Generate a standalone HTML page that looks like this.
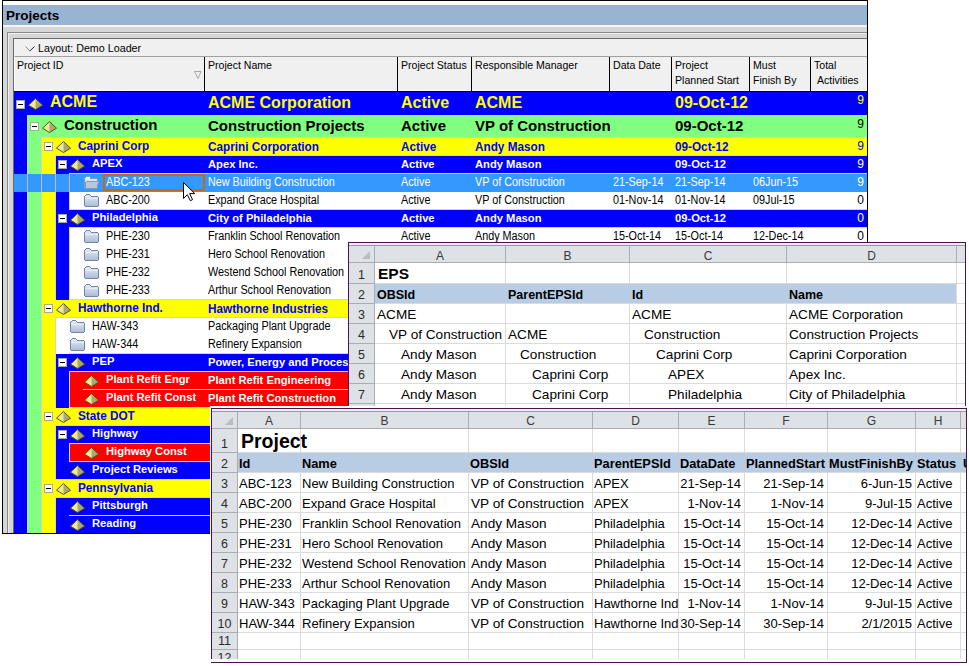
<!DOCTYPE html>
<html><head><meta charset="utf-8"><style>
html,body{margin:0;padding:0;background:#fff;width:969px;height:666px;overflow:hidden;}
body{position:relative;font-family:'Liberation Sans',sans-serif;}
div{position:absolute;}
.t{line-height:1;white-space:nowrap;}
</style></head><body>
<div style="left:2px;top:0px;width:866px;height:534px;background:#d6d6d6;border:1px solid #000;box-sizing:border-box;"></div><div style="left:3px;top:1px;width:864px;height:4px;background:#fff;"></div><div style="left:3px;top:5px;width:864px;height:20px;background:#99b4d1;"></div><div style="left:3px;top:25px;width:864px;height:2px;background:#f4f4f4;"></div><div class="t" style="left:6px;top:8.57px;font-size:13.5px;font-weight:bold;color:#000;">Projects</div><div style="left:7px;top:32px;width:860px;height:1px;background:#8a8a8a;"></div><div style="left:7px;top:32px;width:1px;height:501px;background:#8a8a8a;"></div><div style="left:8px;top:33px;width:859px;height:1px;background:#efefef;"></div><div style="left:8px;top:33px;width:1px;height:500px;background:#efefef;"></div><div style="left:13px;top:38px;width:854px;height:1px;background:#6a6a6a;"></div><div style="left:13px;top:38px;width:1px;height:495px;background:#6a6a6a;"></div><div style="left:14px;top:39px;width:853px;height:17px;background:#f0f0f0;"></div><div style="left:15px;top:56px;width:852px;height:1px;background:#a0a0a0;"></div><svg style="left:25px;top:46px;position:absolute" width="10" height="6" viewBox="0 0 10 6"><path d="M0.5 0.5 L4.8 5" stroke="#8a8a8a" stroke-width="1" fill="none"/><path d="M4.8 5 L9.5 0.5" stroke="#222" stroke-width="1" fill="none"/></svg><div class="t" style="left:38px;top:42.69px;font-size:11px;color:#000;transform:scaleX(0.975);transform-origin:0 0;">Layout: Demo Loader</div><div style="left:14px;top:57px;width:853px;height:34px;background:#f0f0f0;"></div><div style="left:14px;top:57px;width:1px;height:34px;background:#fff;"></div><div style="left:14px;top:90px;width:853px;height:1px;background:#fff;"></div><div style="left:14px;top:91px;width:853px;height:1px;background:#000;"></div><div style="left:204px;top:57px;width:1px;height:34px;background:#000;"></div><div style="left:397px;top:57px;width:1px;height:34px;background:#000;"></div><div style="left:471px;top:57px;width:1px;height:34px;background:#000;"></div><div style="left:609px;top:57px;width:1px;height:34px;background:#000;"></div><div style="left:671px;top:57px;width:1px;height:34px;background:#000;"></div><div style="left:749px;top:57px;width:1px;height:34px;background:#000;"></div><div style="left:810px;top:57px;width:1px;height:34px;background:#000;"></div><div class="t" style="left:17px;top:59.69px;font-size:11px;color:#000;transform:scaleX(0.96);transform-origin:0 0;">Project ID</div><div class="t" style="left:208px;top:59.69px;font-size:11px;color:#000;transform:scaleX(0.96);transform-origin:0 0;">Project Name</div><div class="t" style="left:401px;top:59.69px;font-size:11px;color:#000;transform:scaleX(0.96);transform-origin:0 0;">Project Status</div><div class="t" style="left:475px;top:59.69px;font-size:11px;color:#000;transform:scaleX(0.96);transform-origin:0 0;">Responsible Manager</div><div class="t" style="left:613px;top:59.69px;font-size:11px;color:#000;transform:scaleX(0.96);transform-origin:0 0;">Data Date</div><div class="t" style="left:675px;top:59.69px;font-size:11px;color:#000;transform:scaleX(0.96);transform-origin:0 0;">Project</div><div class="t" style="left:675px;top:74.69px;font-size:11px;color:#000;transform:scaleX(0.96);transform-origin:0 0;">Planned Start</div><div class="t" style="left:753px;top:59.69px;font-size:11px;color:#000;transform:scaleX(0.96);transform-origin:0 0;">Must</div><div class="t" style="left:753px;top:74.69px;font-size:11px;color:#000;transform:scaleX(0.96);transform-origin:0 0;">Finish By</div><div class="t" style="left:814px;top:59.69px;font-size:11px;color:#000;transform:scaleX(0.96);transform-origin:0 0;">Total</div><div class="t" style="left:814px;top:74.69px;font-size:11px;color:#000;transform:scaleX(0.96);transform-origin:0 0;">&nbsp;Activities</div><svg style="left:194px;top:71px;position:absolute" width="8" height="8" viewBox="0 0 8 8"><path d="M0.5 0.5 L7 0.5 L4 7.5 Z" stroke="#a8a8a8" stroke-width="1" fill="none"/></svg><div style="left:14px;top:92px;width:853px;height:441px;background:#0000ff;"></div><div style="left:14px;top:92px;width:853px;height:24px;background:#0000ff;"></div><div style="left:16px;top:100px;width:9px;height:9px;background:#fff;border:1px solid #aca899;box-sizing:border-box;"><div style="left:1px;top:3px;width:5px;height:1px;background:#000;"></div></div><svg style="position:absolute;left:28px;top:98px" width="15" height="12" viewBox="0 0 15 12"><path d="M7.5 0.5 L14.5 7.2 L7.5 11.5 L0.5 7.2 Z" fill="#ece89c"/><path d="M7.5 0.5 L14.5 7.2 L7.5 11.5 Z" fill="#aca873"/><path d="M7.5 0.5 L14.5 7.2 L7.5 11.5 L0.5 7.2 Z" stroke="#5a5210" stroke-width="1" fill="none"/></svg><div class="t" style="left:50px;top:94.46px;font-size:16px;font-weight:bold;color:#ffff00;">ACME</div><div class="t" style="left:208px;top:95.46px;font-size:16px;font-weight:bold;color:#ffff00;">ACME Corporation</div><div class="t" style="left:401px;top:95.46px;font-size:16px;font-weight:bold;color:#ffff00;">Active</div><div class="t" style="left:475px;top:95.46px;font-size:16px;font-weight:bold;color:#ffff00;">ACME</div><div class="t" style="left:675px;top:95.46px;font-size:16px;font-weight:bold;color:#ffff00;">09-Oct-12</div><div class="t" style="left:800px;top:93.84px;font-size:12px;width:64px;text-align:right;color:#ffff00;">9</div><div style="left:14px;top:116px;width:14px;height:22px;background:#0000ff;"></div><div style="left:28px;top:116px;width:839px;height:22px;background:#80ff80;"></div><div style="left:27px;top:116px;width:1px;height:22px;background:#d8d4c8;"></div><div style="left:27px;top:115px;width:840px;height:1px;background:#d8d4c8;"></div><div style="left:30px;top:122px;width:9px;height:9px;background:#fff;border:1px solid #aca899;box-sizing:border-box;"><div style="left:1px;top:3px;width:5px;height:1px;background:#000;"></div></div><svg style="position:absolute;left:42px;top:121px" width="15" height="12" viewBox="0 0 15 12"><path d="M7.5 0.5 L14.5 7.2 L7.5 11.5 L0.5 7.2 Z" fill="#ece89c"/><path d="M7.5 0.5 L14.5 7.2 L7.5 11.5 Z" fill="#aca873"/><path d="M7.5 0.5 L14.5 7.2 L7.5 11.5 L0.5 7.2 Z" stroke="#5a5210" stroke-width="1" fill="none"/></svg><div class="t" style="left:64px;top:117.30px;font-size:15px;font-weight:bold;color:#000;">Construction</div><div class="t" style="left:208px;top:118.30px;font-size:15px;font-weight:bold;color:#000;">Construction Projects</div><div class="t" style="left:401px;top:118.30px;font-size:15px;font-weight:bold;color:#000;">Active</div><div class="t" style="left:475px;top:118.30px;font-size:15px;font-weight:bold;color:#000;">VP of Construction</div><div class="t" style="left:675px;top:118.30px;font-size:15px;font-weight:bold;color:#000;">09-Oct-12</div><div class="t" style="left:800px;top:117.84px;font-size:12px;width:64px;text-align:right;color:#000;">9</div><div style="left:14px;top:138px;width:14px;height:18px;background:#0000ff;"></div><div style="left:28px;top:138px;width:14px;height:18px;background:#80ff80;"></div><div style="left:27px;top:138px;width:1px;height:18px;background:#d8d4c8;"></div><div style="left:42px;top:138px;width:825px;height:18px;background:#ffff00;"></div><div style="left:41px;top:138px;width:1px;height:18px;background:#d8d4c8;"></div><div style="left:41px;top:137px;width:826px;height:1px;background:#d8d4c8;"></div><div style="left:44px;top:142px;width:9px;height:9px;background:#fff;border:1px solid #aca899;box-sizing:border-box;"><div style="left:1px;top:3px;width:5px;height:1px;background:#000;"></div></div><svg style="position:absolute;left:56px;top:141px" width="15" height="12" viewBox="0 0 15 12"><path d="M7.5 0.5 L14.5 7.2 L7.5 11.5 L0.5 7.2 Z" fill="#ece89c"/><path d="M7.5 0.5 L14.5 7.2 L7.5 11.5 Z" fill="#aca873"/><path d="M7.5 0.5 L14.5 7.2 L7.5 11.5 L0.5 7.2 Z" stroke="#5a5210" stroke-width="1" fill="none"/></svg><div class="t" style="left:78px;top:140.42px;font-size:12.5px;font-weight:bold;color:#0000ff;transform:scaleX(0.94);transform-origin:0 0;">Caprini Corp</div><div class="t" style="left:208px;top:141.42px;font-size:12.5px;font-weight:bold;color:#0000ff;transform:scaleX(0.94);transform-origin:0 0;">Caprini Corporation</div><div class="t" style="left:401px;top:141.42px;font-size:12.5px;font-weight:bold;color:#0000ff;transform:scaleX(0.94);transform-origin:0 0;">Active</div><div class="t" style="left:475px;top:141.42px;font-size:12.5px;font-weight:bold;color:#0000ff;transform:scaleX(0.94);transform-origin:0 0;">Andy Mason</div><div class="t" style="left:675px;top:141.42px;font-size:12.5px;font-weight:bold;color:#0000ff;transform:scaleX(0.94);transform-origin:0 0;">09-Oct-12</div><div class="t" style="left:800px;top:139.84px;font-size:12px;width:64px;text-align:right;color:#0000ff;">9</div><div style="left:14px;top:156px;width:14px;height:18px;background:#0000ff;"></div><div style="left:28px;top:156px;width:14px;height:18px;background:#80ff80;"></div><div style="left:42px;top:156px;width:14px;height:18px;background:#ffff00;"></div><div style="left:27px;top:156px;width:1px;height:18px;background:#d8d4c8;"></div><div style="left:41px;top:156px;width:1px;height:18px;background:#d8d4c8;"></div><div style="left:56px;top:156px;width:811px;height:18px;background:#0000ff;"></div><div style="left:55px;top:156px;width:1px;height:18px;background:#d8d4c8;"></div><div style="left:55px;top:155px;width:812px;height:1px;background:#d8d4c8;"></div><div style="left:58px;top:160px;width:9px;height:9px;background:#fff;border:1px solid #aca899;box-sizing:border-box;"><div style="left:1px;top:3px;width:5px;height:1px;background:#000;"></div></div><svg style="position:absolute;left:70px;top:159px" width="15" height="12" viewBox="0 0 15 12"><path d="M7.5 0.5 L14.5 7.2 L7.5 11.5 L0.5 7.2 Z" fill="#ece89c"/><path d="M7.5 0.5 L14.5 7.2 L7.5 11.5 Z" fill="#aca873"/><path d="M7.5 0.5 L14.5 7.2 L7.5 11.5 L0.5 7.2 Z" stroke="#5a5210" stroke-width="1" fill="none"/></svg><div class="t" style="left:92px;top:157.52px;font-size:11.2px;font-weight:bold;color:#fff;">APEX</div><div class="t" style="left:208px;top:158.52px;font-size:11.2px;font-weight:bold;color:#fff;">Apex Inc.</div><div class="t" style="left:401px;top:158.52px;font-size:11.2px;font-weight:bold;color:#fff;">Active</div><div class="t" style="left:475px;top:158.52px;font-size:11.2px;font-weight:bold;color:#fff;">Andy Mason</div><div class="t" style="left:675px;top:158.52px;font-size:11.2px;font-weight:bold;color:#fff;">09-Oct-12</div><div class="t" style="left:800px;top:157.84px;font-size:12px;width:64px;text-align:right;color:#fff;">9</div><div style="left:14px;top:174px;width:14px;height:18px;background:#3399ff;"></div><div style="left:28px;top:174px;width:14px;height:18px;background:#3399ff;"></div><div style="left:42px;top:174px;width:14px;height:18px;background:#3399ff;"></div><div style="left:56px;top:174px;width:14px;height:18px;background:#3399ff;"></div><div style="left:27px;top:174px;width:1px;height:18px;background:#b9bbbe;"></div><div style="left:41px;top:174px;width:1px;height:18px;background:#b9bbbe;"></div><div style="left:55px;top:174px;width:1px;height:18px;background:#b9bbbe;"></div><div style="left:70px;top:174px;width:797px;height:18px;background:#3399ff;"></div><div style="left:69px;top:174px;width:1px;height:18px;background:#b9bbbe;"></div><div style="left:69px;top:173px;width:798px;height:1px;background:#d8d4c8;"></div><svg style="position:absolute;left:84px;top:176px" width="16" height="13" viewBox="0 0 16 13" shape-rendering="crispEdges"><rect x="1" y="1" width="5" height="2" fill="#e8f4fc"/><rect x="1" y="3" width="12" height="8" fill="#d4e8f6"/><g fill="#8a9ab0"><rect x="2" y="0" width="4" height="1"/><rect x="1" y="1" width="1" height="1"/><rect x="6" y="1" width="1" height="1"/><rect x="7" y="2" width="6" height="1"/><rect x="0" y="2" width="1" height="10"/><rect x="13" y="3" width="1" height="2"/></g><path d="M2 5 L15 5 L13.5 12 L1 12 Z" fill="#b9c5dc" shape-rendering="auto"/><g fill="#8a9ab0"><rect x="2" y="5" width="13" height="1"/><rect x="1" y="12" width="12" height="1"/><rect x="14" y="6" width="1" height="2"/><rect x="13" y="8" width="1" height="4"/><rect x="1" y="6" width="1" height="6"/></g></svg><div class="t" style="left:106px;top:175.84px;font-size:12px;color:#fff;font-size:12px;transform:scaleX(0.9);transform-origin:0 0;">ABC-123</div><div class="t" style="left:208px;top:175.84px;font-size:12px;color:#fff;font-size:12px;transform:scaleX(0.9);transform-origin:0 0;">New Building Construction</div><div class="t" style="left:401px;top:175.84px;font-size:12px;color:#fff;font-size:12px;transform:scaleX(0.9);transform-origin:0 0;">Active</div><div class="t" style="left:475px;top:175.84px;font-size:12px;color:#fff;font-size:12px;transform:scaleX(0.9);transform-origin:0 0;">VP of Construction</div><div class="t" style="left:613px;top:175.84px;font-size:12px;color:#fff;font-size:12px;transform:scaleX(0.9);transform-origin:0 0;">21-Sep-14</div><div class="t" style="left:675px;top:175.84px;font-size:12px;color:#fff;font-size:12px;transform:scaleX(0.9);transform-origin:0 0;">21-Sep-14</div><div class="t" style="left:753px;top:175.84px;font-size:12px;color:#fff;font-size:12px;transform:scaleX(0.9);transform-origin:0 0;">06Jun-15</div><div class="t" style="left:800px;top:175.84px;font-size:12px;width:64px;text-align:right;color:#fff;">9</div><div style="left:14px;top:192px;width:14px;height:18px;background:#0000ff;"></div><div style="left:28px;top:192px;width:14px;height:18px;background:#80ff80;"></div><div style="left:42px;top:192px;width:14px;height:18px;background:#ffff00;"></div><div style="left:56px;top:192px;width:14px;height:18px;background:#0000ff;"></div><div style="left:27px;top:192px;width:1px;height:18px;background:#d8d4c8;"></div><div style="left:41px;top:192px;width:1px;height:18px;background:#d8d4c8;"></div><div style="left:55px;top:192px;width:1px;height:18px;background:#d8d4c8;"></div><div style="left:70px;top:192px;width:797px;height:18px;background:#ffffff;"></div><div style="left:69px;top:192px;width:1px;height:18px;background:#d8d4c8;"></div><svg style="position:absolute;left:84px;top:194px" width="15" height="13" viewBox="0 0 15 13" shape-rendering="crispEdges"><defs><linearGradient id="fg5" x1="0" y1="0" x2="0" y2="1"><stop offset="0" stop-color="#dfe7f3"/><stop offset="1" stop-color="#aebdd5"/></linearGradient></defs><rect x="1" y="2" width="13" height="10" fill="url(#fg5)"/><rect x="2" y="1" width="4" height="1" fill="#dce4f2"/><rect x="1" y="4" width="13" height="1" fill="#e6ecf6"/><g fill="#7088a8"><rect x="2" y="0" width="4" height="1"/><rect x="1" y="1" width="1" height="1"/><rect x="6" y="1" width="1" height="1"/><rect x="7" y="2" width="7" height="1"/><rect x="0" y="2" width="1" height="10"/><rect x="14" y="3" width="1" height="9"/><rect x="1" y="12" width="13" height="1"/></g></svg><div class="t" style="left:106px;top:193.84px;font-size:12px;color:#000;font-size:12px;transform:scaleX(0.9);transform-origin:0 0;">ABC-200</div><div class="t" style="left:208px;top:193.84px;font-size:12px;color:#000;font-size:12px;transform:scaleX(0.9);transform-origin:0 0;">Expand Grace Hospital</div><div class="t" style="left:401px;top:193.84px;font-size:12px;color:#000;font-size:12px;transform:scaleX(0.9);transform-origin:0 0;">Active</div><div class="t" style="left:475px;top:193.84px;font-size:12px;color:#000;font-size:12px;transform:scaleX(0.9);transform-origin:0 0;">VP of Construction</div><div class="t" style="left:613px;top:193.84px;font-size:12px;color:#000;font-size:12px;transform:scaleX(0.9);transform-origin:0 0;">01-Nov-14</div><div class="t" style="left:675px;top:193.84px;font-size:12px;color:#000;font-size:12px;transform:scaleX(0.9);transform-origin:0 0;">01-Nov-14</div><div class="t" style="left:753px;top:193.84px;font-size:12px;color:#000;font-size:12px;transform:scaleX(0.9);transform-origin:0 0;">09Jul-15</div><div class="t" style="left:800px;top:193.84px;font-size:12px;width:64px;text-align:right;color:#000;">0</div><div style="left:14px;top:210px;width:14px;height:18px;background:#0000ff;"></div><div style="left:28px;top:210px;width:14px;height:18px;background:#80ff80;"></div><div style="left:42px;top:210px;width:14px;height:18px;background:#ffff00;"></div><div style="left:27px;top:210px;width:1px;height:18px;background:#d8d4c8;"></div><div style="left:41px;top:210px;width:1px;height:18px;background:#d8d4c8;"></div><div style="left:56px;top:210px;width:811px;height:18px;background:#0000ff;"></div><div style="left:55px;top:210px;width:1px;height:18px;background:#d8d4c8;"></div><div style="left:69px;top:209px;width:798px;height:1px;background:#d8d4c8;"></div><div style="left:58px;top:214px;width:9px;height:9px;background:#fff;border:1px solid #aca899;box-sizing:border-box;"><div style="left:1px;top:3px;width:5px;height:1px;background:#000;"></div></div><svg style="position:absolute;left:70px;top:213px" width="15" height="12" viewBox="0 0 15 12"><path d="M7.5 0.5 L14.5 7.2 L7.5 11.5 L0.5 7.2 Z" fill="#ece89c"/><path d="M7.5 0.5 L14.5 7.2 L7.5 11.5 Z" fill="#aca873"/><path d="M7.5 0.5 L14.5 7.2 L7.5 11.5 L0.5 7.2 Z" stroke="#5a5210" stroke-width="1" fill="none"/></svg><div class="t" style="left:92px;top:211.52px;font-size:11.2px;font-weight:bold;color:#fff;">Philadelphia</div><div class="t" style="left:208px;top:212.52px;font-size:11.2px;font-weight:bold;color:#fff;">City of Philadelphia</div><div class="t" style="left:401px;top:212.52px;font-size:11.2px;font-weight:bold;color:#fff;">Active</div><div class="t" style="left:475px;top:212.52px;font-size:11.2px;font-weight:bold;color:#fff;">Andy Mason</div><div class="t" style="left:675px;top:212.52px;font-size:11.2px;font-weight:bold;color:#fff;">09-Oct-12</div><div class="t" style="left:800px;top:211.84px;font-size:12px;width:64px;text-align:right;color:#fff;">0</div><div style="left:14px;top:228px;width:14px;height:18px;background:#0000ff;"></div><div style="left:28px;top:228px;width:14px;height:18px;background:#80ff80;"></div><div style="left:42px;top:228px;width:14px;height:18px;background:#ffff00;"></div><div style="left:56px;top:228px;width:14px;height:18px;background:#0000ff;"></div><div style="left:27px;top:228px;width:1px;height:18px;background:#d8d4c8;"></div><div style="left:41px;top:228px;width:1px;height:18px;background:#d8d4c8;"></div><div style="left:55px;top:228px;width:1px;height:18px;background:#d8d4c8;"></div><div style="left:70px;top:228px;width:797px;height:18px;background:#ffffff;"></div><div style="left:69px;top:228px;width:1px;height:18px;background:#d8d4c8;"></div><div style="left:69px;top:227px;width:798px;height:1px;background:#d8d4c8;"></div><svg style="position:absolute;left:84px;top:230px" width="15" height="13" viewBox="0 0 15 13" shape-rendering="crispEdges"><defs><linearGradient id="fg7" x1="0" y1="0" x2="0" y2="1"><stop offset="0" stop-color="#dfe7f3"/><stop offset="1" stop-color="#aebdd5"/></linearGradient></defs><rect x="1" y="2" width="13" height="10" fill="url(#fg7)"/><rect x="2" y="1" width="4" height="1" fill="#dce4f2"/><rect x="1" y="4" width="13" height="1" fill="#e6ecf6"/><g fill="#7088a8"><rect x="2" y="0" width="4" height="1"/><rect x="1" y="1" width="1" height="1"/><rect x="6" y="1" width="1" height="1"/><rect x="7" y="2" width="7" height="1"/><rect x="0" y="2" width="1" height="10"/><rect x="14" y="3" width="1" height="9"/><rect x="1" y="12" width="13" height="1"/></g></svg><div class="t" style="left:106px;top:229.84px;font-size:12px;color:#000;font-size:12px;transform:scaleX(0.9);transform-origin:0 0;">PHE-230</div><div class="t" style="left:208px;top:229.84px;font-size:12px;color:#000;font-size:12px;transform:scaleX(0.9);transform-origin:0 0;">Franklin School Renovation</div><div class="t" style="left:401px;top:229.84px;font-size:12px;color:#000;font-size:12px;transform:scaleX(0.9);transform-origin:0 0;">Active</div><div class="t" style="left:475px;top:229.84px;font-size:12px;color:#000;font-size:12px;transform:scaleX(0.9);transform-origin:0 0;">Andy Mason</div><div class="t" style="left:613px;top:229.84px;font-size:12px;color:#000;font-size:12px;transform:scaleX(0.9);transform-origin:0 0;">15-Oct-14</div><div class="t" style="left:675px;top:229.84px;font-size:12px;color:#000;font-size:12px;transform:scaleX(0.9);transform-origin:0 0;">15-Oct-14</div><div class="t" style="left:753px;top:229.84px;font-size:12px;color:#000;font-size:12px;transform:scaleX(0.9);transform-origin:0 0;">12-Dec-14</div><div class="t" style="left:800px;top:229.84px;font-size:12px;width:64px;text-align:right;color:#000;">0</div><div style="left:14px;top:246px;width:14px;height:18px;background:#0000ff;"></div><div style="left:28px;top:246px;width:14px;height:18px;background:#80ff80;"></div><div style="left:42px;top:246px;width:14px;height:18px;background:#ffff00;"></div><div style="left:56px;top:246px;width:14px;height:18px;background:#0000ff;"></div><div style="left:27px;top:246px;width:1px;height:18px;background:#d8d4c8;"></div><div style="left:41px;top:246px;width:1px;height:18px;background:#d8d4c8;"></div><div style="left:55px;top:246px;width:1px;height:18px;background:#d8d4c8;"></div><div style="left:70px;top:246px;width:797px;height:18px;background:#ffffff;"></div><div style="left:69px;top:246px;width:1px;height:18px;background:#d8d4c8;"></div><svg style="position:absolute;left:84px;top:248px" width="15" height="13" viewBox="0 0 15 13" shape-rendering="crispEdges"><defs><linearGradient id="fg8" x1="0" y1="0" x2="0" y2="1"><stop offset="0" stop-color="#dfe7f3"/><stop offset="1" stop-color="#aebdd5"/></linearGradient></defs><rect x="1" y="2" width="13" height="10" fill="url(#fg8)"/><rect x="2" y="1" width="4" height="1" fill="#dce4f2"/><rect x="1" y="4" width="13" height="1" fill="#e6ecf6"/><g fill="#7088a8"><rect x="2" y="0" width="4" height="1"/><rect x="1" y="1" width="1" height="1"/><rect x="6" y="1" width="1" height="1"/><rect x="7" y="2" width="7" height="1"/><rect x="0" y="2" width="1" height="10"/><rect x="14" y="3" width="1" height="9"/><rect x="1" y="12" width="13" height="1"/></g></svg><div class="t" style="left:106px;top:247.84px;font-size:12px;color:#000;font-size:12px;transform:scaleX(0.9);transform-origin:0 0;">PHE-231</div><div class="t" style="left:208px;top:247.84px;font-size:12px;color:#000;font-size:12px;transform:scaleX(0.9);transform-origin:0 0;">Hero School Renovation</div><div class="t" style="left:401px;top:247.84px;font-size:12px;color:#000;font-size:12px;transform:scaleX(0.9);transform-origin:0 0;"></div><div class="t" style="left:475px;top:247.84px;font-size:12px;color:#000;font-size:12px;transform:scaleX(0.9);transform-origin:0 0;"></div><div class="t" style="left:613px;top:247.84px;font-size:12px;color:#000;font-size:12px;transform:scaleX(0.9);transform-origin:0 0;"></div><div class="t" style="left:675px;top:247.84px;font-size:12px;color:#000;font-size:12px;transform:scaleX(0.9);transform-origin:0 0;"></div><div class="t" style="left:753px;top:247.84px;font-size:12px;color:#000;font-size:12px;transform:scaleX(0.9);transform-origin:0 0;"></div><div class="t" style="left:800px;top:247.84px;font-size:12px;width:64px;text-align:right;color:#000;"></div><div style="left:14px;top:264px;width:14px;height:18px;background:#0000ff;"></div><div style="left:28px;top:264px;width:14px;height:18px;background:#80ff80;"></div><div style="left:42px;top:264px;width:14px;height:18px;background:#ffff00;"></div><div style="left:56px;top:264px;width:14px;height:18px;background:#0000ff;"></div><div style="left:27px;top:264px;width:1px;height:18px;background:#d8d4c8;"></div><div style="left:41px;top:264px;width:1px;height:18px;background:#d8d4c8;"></div><div style="left:55px;top:264px;width:1px;height:18px;background:#d8d4c8;"></div><div style="left:70px;top:264px;width:797px;height:18px;background:#ffffff;"></div><div style="left:69px;top:264px;width:1px;height:18px;background:#d8d4c8;"></div><svg style="position:absolute;left:84px;top:266px" width="15" height="13" viewBox="0 0 15 13" shape-rendering="crispEdges"><defs><linearGradient id="fg9" x1="0" y1="0" x2="0" y2="1"><stop offset="0" stop-color="#dfe7f3"/><stop offset="1" stop-color="#aebdd5"/></linearGradient></defs><rect x="1" y="2" width="13" height="10" fill="url(#fg9)"/><rect x="2" y="1" width="4" height="1" fill="#dce4f2"/><rect x="1" y="4" width="13" height="1" fill="#e6ecf6"/><g fill="#7088a8"><rect x="2" y="0" width="4" height="1"/><rect x="1" y="1" width="1" height="1"/><rect x="6" y="1" width="1" height="1"/><rect x="7" y="2" width="7" height="1"/><rect x="0" y="2" width="1" height="10"/><rect x="14" y="3" width="1" height="9"/><rect x="1" y="12" width="13" height="1"/></g></svg><div class="t" style="left:106px;top:265.84px;font-size:12px;color:#000;font-size:12px;transform:scaleX(0.9);transform-origin:0 0;">PHE-232</div><div class="t" style="left:208px;top:265.84px;font-size:12px;color:#000;font-size:12px;transform:scaleX(0.9);transform-origin:0 0;">Westend School Renovation</div><div class="t" style="left:401px;top:265.84px;font-size:12px;color:#000;font-size:12px;transform:scaleX(0.9);transform-origin:0 0;"></div><div class="t" style="left:475px;top:265.84px;font-size:12px;color:#000;font-size:12px;transform:scaleX(0.9);transform-origin:0 0;"></div><div class="t" style="left:613px;top:265.84px;font-size:12px;color:#000;font-size:12px;transform:scaleX(0.9);transform-origin:0 0;"></div><div class="t" style="left:675px;top:265.84px;font-size:12px;color:#000;font-size:12px;transform:scaleX(0.9);transform-origin:0 0;"></div><div class="t" style="left:753px;top:265.84px;font-size:12px;color:#000;font-size:12px;transform:scaleX(0.9);transform-origin:0 0;"></div><div class="t" style="left:800px;top:265.84px;font-size:12px;width:64px;text-align:right;color:#000;"></div><div style="left:14px;top:282px;width:14px;height:18px;background:#0000ff;"></div><div style="left:28px;top:282px;width:14px;height:18px;background:#80ff80;"></div><div style="left:42px;top:282px;width:14px;height:18px;background:#ffff00;"></div><div style="left:56px;top:282px;width:14px;height:18px;background:#0000ff;"></div><div style="left:27px;top:282px;width:1px;height:18px;background:#d8d4c8;"></div><div style="left:41px;top:282px;width:1px;height:18px;background:#d8d4c8;"></div><div style="left:55px;top:282px;width:1px;height:18px;background:#d8d4c8;"></div><div style="left:70px;top:282px;width:797px;height:18px;background:#ffffff;"></div><div style="left:69px;top:282px;width:1px;height:18px;background:#d8d4c8;"></div><svg style="position:absolute;left:84px;top:284px" width="15" height="13" viewBox="0 0 15 13" shape-rendering="crispEdges"><defs><linearGradient id="fg10" x1="0" y1="0" x2="0" y2="1"><stop offset="0" stop-color="#dfe7f3"/><stop offset="1" stop-color="#aebdd5"/></linearGradient></defs><rect x="1" y="2" width="13" height="10" fill="url(#fg10)"/><rect x="2" y="1" width="4" height="1" fill="#dce4f2"/><rect x="1" y="4" width="13" height="1" fill="#e6ecf6"/><g fill="#7088a8"><rect x="2" y="0" width="4" height="1"/><rect x="1" y="1" width="1" height="1"/><rect x="6" y="1" width="1" height="1"/><rect x="7" y="2" width="7" height="1"/><rect x="0" y="2" width="1" height="10"/><rect x="14" y="3" width="1" height="9"/><rect x="1" y="12" width="13" height="1"/></g></svg><div class="t" style="left:106px;top:283.84px;font-size:12px;color:#000;font-size:12px;transform:scaleX(0.9);transform-origin:0 0;">PHE-233</div><div class="t" style="left:208px;top:283.84px;font-size:12px;color:#000;font-size:12px;transform:scaleX(0.9);transform-origin:0 0;">Arthur School Renovation</div><div class="t" style="left:401px;top:283.84px;font-size:12px;color:#000;font-size:12px;transform:scaleX(0.9);transform-origin:0 0;"></div><div class="t" style="left:475px;top:283.84px;font-size:12px;color:#000;font-size:12px;transform:scaleX(0.9);transform-origin:0 0;"></div><div class="t" style="left:613px;top:283.84px;font-size:12px;color:#000;font-size:12px;transform:scaleX(0.9);transform-origin:0 0;"></div><div class="t" style="left:675px;top:283.84px;font-size:12px;color:#000;font-size:12px;transform:scaleX(0.9);transform-origin:0 0;"></div><div class="t" style="left:753px;top:283.84px;font-size:12px;color:#000;font-size:12px;transform:scaleX(0.9);transform-origin:0 0;"></div><div class="t" style="left:800px;top:283.84px;font-size:12px;width:64px;text-align:right;color:#000;"></div><div style="left:14px;top:300px;width:14px;height:18px;background:#0000ff;"></div><div style="left:28px;top:300px;width:14px;height:18px;background:#80ff80;"></div><div style="left:27px;top:300px;width:1px;height:18px;background:#d8d4c8;"></div><div style="left:42px;top:300px;width:825px;height:18px;background:#ffff00;"></div><div style="left:41px;top:300px;width:1px;height:18px;background:#d8d4c8;"></div><div style="left:69px;top:299px;width:798px;height:1px;background:#d8d4c8;"></div><div style="left:44px;top:304px;width:9px;height:9px;background:#fff;border:1px solid #aca899;box-sizing:border-box;"><div style="left:1px;top:3px;width:5px;height:1px;background:#000;"></div></div><svg style="position:absolute;left:56px;top:303px" width="15" height="12" viewBox="0 0 15 12"><path d="M7.5 0.5 L14.5 7.2 L7.5 11.5 L0.5 7.2 Z" fill="#ece89c"/><path d="M7.5 0.5 L14.5 7.2 L7.5 11.5 Z" fill="#aca873"/><path d="M7.5 0.5 L14.5 7.2 L7.5 11.5 L0.5 7.2 Z" stroke="#5a5210" stroke-width="1" fill="none"/></svg><div class="t" style="left:78px;top:302.42px;font-size:12.5px;font-weight:bold;color:#0000ff;transform:scaleX(0.94);transform-origin:0 0;">Hawthorne Ind.</div><div class="t" style="left:208px;top:303.42px;font-size:12.5px;font-weight:bold;color:#0000ff;transform:scaleX(0.94);transform-origin:0 0;">Hawthorne Industries</div><div class="t" style="left:401px;top:303.42px;font-size:12.5px;font-weight:bold;color:#0000ff;transform:scaleX(0.94);transform-origin:0 0;"></div><div class="t" style="left:475px;top:303.42px;font-size:12.5px;font-weight:bold;color:#0000ff;transform:scaleX(0.94);transform-origin:0 0;"></div><div class="t" style="left:675px;top:303.42px;font-size:12.5px;font-weight:bold;color:#0000ff;transform:scaleX(0.94);transform-origin:0 0;"></div><div class="t" style="left:800px;top:301.84px;font-size:12px;width:64px;text-align:right;color:#0000ff;"></div><div style="left:14px;top:318px;width:14px;height:18px;background:#0000ff;"></div><div style="left:28px;top:318px;width:14px;height:18px;background:#80ff80;"></div><div style="left:42px;top:318px;width:14px;height:18px;background:#ffff00;"></div><div style="left:27px;top:318px;width:1px;height:18px;background:#d8d4c8;"></div><div style="left:41px;top:318px;width:1px;height:18px;background:#d8d4c8;"></div><div style="left:56px;top:318px;width:811px;height:18px;background:#ffffff;"></div><div style="left:55px;top:318px;width:1px;height:18px;background:#d8d4c8;"></div><div style="left:55px;top:317px;width:812px;height:1px;background:#d8d4c8;"></div><svg style="position:absolute;left:70px;top:320px" width="15" height="13" viewBox="0 0 15 13" shape-rendering="crispEdges"><defs><linearGradient id="fg12" x1="0" y1="0" x2="0" y2="1"><stop offset="0" stop-color="#dfe7f3"/><stop offset="1" stop-color="#aebdd5"/></linearGradient></defs><rect x="1" y="2" width="13" height="10" fill="url(#fg12)"/><rect x="2" y="1" width="4" height="1" fill="#dce4f2"/><rect x="1" y="4" width="13" height="1" fill="#e6ecf6"/><g fill="#7088a8"><rect x="2" y="0" width="4" height="1"/><rect x="1" y="1" width="1" height="1"/><rect x="6" y="1" width="1" height="1"/><rect x="7" y="2" width="7" height="1"/><rect x="0" y="2" width="1" height="10"/><rect x="14" y="3" width="1" height="9"/><rect x="1" y="12" width="13" height="1"/></g></svg><div class="t" style="left:92px;top:319.84px;font-size:12px;color:#000;font-size:12px;transform:scaleX(0.9);transform-origin:0 0;">HAW-343</div><div class="t" style="left:208px;top:319.84px;font-size:12px;color:#000;font-size:12px;transform:scaleX(0.9);transform-origin:0 0;">Packaging Plant Upgrade</div><div class="t" style="left:401px;top:319.84px;font-size:12px;color:#000;font-size:12px;transform:scaleX(0.9);transform-origin:0 0;"></div><div class="t" style="left:475px;top:319.84px;font-size:12px;color:#000;font-size:12px;transform:scaleX(0.9);transform-origin:0 0;"></div><div class="t" style="left:613px;top:319.84px;font-size:12px;color:#000;font-size:12px;transform:scaleX(0.9);transform-origin:0 0;"></div><div class="t" style="left:675px;top:319.84px;font-size:12px;color:#000;font-size:12px;transform:scaleX(0.9);transform-origin:0 0;"></div><div class="t" style="left:753px;top:319.84px;font-size:12px;color:#000;font-size:12px;transform:scaleX(0.9);transform-origin:0 0;"></div><div class="t" style="left:800px;top:319.84px;font-size:12px;width:64px;text-align:right;color:#000;"></div><div style="left:14px;top:336px;width:14px;height:18px;background:#0000ff;"></div><div style="left:28px;top:336px;width:14px;height:18px;background:#80ff80;"></div><div style="left:42px;top:336px;width:14px;height:18px;background:#ffff00;"></div><div style="left:27px;top:336px;width:1px;height:18px;background:#d8d4c8;"></div><div style="left:41px;top:336px;width:1px;height:18px;background:#d8d4c8;"></div><div style="left:56px;top:336px;width:811px;height:18px;background:#ffffff;"></div><div style="left:55px;top:336px;width:1px;height:18px;background:#d8d4c8;"></div><svg style="position:absolute;left:70px;top:338px" width="15" height="13" viewBox="0 0 15 13" shape-rendering="crispEdges"><defs><linearGradient id="fg13" x1="0" y1="0" x2="0" y2="1"><stop offset="0" stop-color="#dfe7f3"/><stop offset="1" stop-color="#aebdd5"/></linearGradient></defs><rect x="1" y="2" width="13" height="10" fill="url(#fg13)"/><rect x="2" y="1" width="4" height="1" fill="#dce4f2"/><rect x="1" y="4" width="13" height="1" fill="#e6ecf6"/><g fill="#7088a8"><rect x="2" y="0" width="4" height="1"/><rect x="1" y="1" width="1" height="1"/><rect x="6" y="1" width="1" height="1"/><rect x="7" y="2" width="7" height="1"/><rect x="0" y="2" width="1" height="10"/><rect x="14" y="3" width="1" height="9"/><rect x="1" y="12" width="13" height="1"/></g></svg><div class="t" style="left:92px;top:337.84px;font-size:12px;color:#000;font-size:12px;transform:scaleX(0.9);transform-origin:0 0;">HAW-344</div><div class="t" style="left:208px;top:337.84px;font-size:12px;color:#000;font-size:12px;transform:scaleX(0.9);transform-origin:0 0;">Refinery Expansion</div><div class="t" style="left:401px;top:337.84px;font-size:12px;color:#000;font-size:12px;transform:scaleX(0.9);transform-origin:0 0;"></div><div class="t" style="left:475px;top:337.84px;font-size:12px;color:#000;font-size:12px;transform:scaleX(0.9);transform-origin:0 0;"></div><div class="t" style="left:613px;top:337.84px;font-size:12px;color:#000;font-size:12px;transform:scaleX(0.9);transform-origin:0 0;"></div><div class="t" style="left:675px;top:337.84px;font-size:12px;color:#000;font-size:12px;transform:scaleX(0.9);transform-origin:0 0;"></div><div class="t" style="left:753px;top:337.84px;font-size:12px;color:#000;font-size:12px;transform:scaleX(0.9);transform-origin:0 0;"></div><div class="t" style="left:800px;top:337.84px;font-size:12px;width:64px;text-align:right;color:#000;"></div><div style="left:14px;top:354px;width:14px;height:18px;background:#0000ff;"></div><div style="left:28px;top:354px;width:14px;height:18px;background:#80ff80;"></div><div style="left:42px;top:354px;width:14px;height:18px;background:#ffff00;"></div><div style="left:27px;top:354px;width:1px;height:18px;background:#d8d4c8;"></div><div style="left:41px;top:354px;width:1px;height:18px;background:#d8d4c8;"></div><div style="left:56px;top:354px;width:811px;height:18px;background:#0000ff;"></div><div style="left:55px;top:354px;width:1px;height:18px;background:#d8d4c8;"></div><div style="left:69px;top:353px;width:798px;height:1px;background:#d8d4c8;"></div><div style="left:58px;top:358px;width:9px;height:9px;background:#fff;border:1px solid #aca899;box-sizing:border-box;"><div style="left:1px;top:3px;width:5px;height:1px;background:#000;"></div></div><svg style="position:absolute;left:70px;top:357px" width="15" height="12" viewBox="0 0 15 12"><path d="M7.5 0.5 L14.5 7.2 L7.5 11.5 L0.5 7.2 Z" fill="#ece89c"/><path d="M7.5 0.5 L14.5 7.2 L7.5 11.5 Z" fill="#aca873"/><path d="M7.5 0.5 L14.5 7.2 L7.5 11.5 L0.5 7.2 Z" stroke="#5a5210" stroke-width="1" fill="none"/></svg><div class="t" style="left:92px;top:355.52px;font-size:11.2px;font-weight:bold;color:#fff;">PEP</div><div class="t" style="left:208px;top:356.52px;font-size:11.2px;font-weight:bold;color:#fff;">Power, Energy and Process</div><div class="t" style="left:401px;top:356.52px;font-size:11.2px;font-weight:bold;color:#fff;"></div><div class="t" style="left:475px;top:356.52px;font-size:11.2px;font-weight:bold;color:#fff;"></div><div class="t" style="left:675px;top:356.52px;font-size:11.2px;font-weight:bold;color:#fff;"></div><div class="t" style="left:800px;top:355.84px;font-size:12px;width:64px;text-align:right;color:#fff;"></div><div style="left:14px;top:372px;width:14px;height:18px;background:#0000ff;"></div><div style="left:28px;top:372px;width:14px;height:18px;background:#80ff80;"></div><div style="left:42px;top:372px;width:14px;height:18px;background:#ffff00;"></div><div style="left:56px;top:372px;width:14px;height:18px;background:#0000ff;"></div><div style="left:27px;top:372px;width:1px;height:18px;background:#d8d4c8;"></div><div style="left:41px;top:372px;width:1px;height:18px;background:#d8d4c8;"></div><div style="left:55px;top:372px;width:1px;height:18px;background:#d8d4c8;"></div><div style="left:70px;top:372px;width:797px;height:18px;background:#ff0000;"></div><div style="left:69px;top:372px;width:1px;height:18px;background:#d8d4c8;"></div><div style="left:69px;top:371px;width:798px;height:1px;background:#d8d4c8;"></div><svg style="position:absolute;left:84px;top:375px" width="15" height="12" viewBox="0 0 15 12"><path d="M7.5 0.5 L14.5 7.2 L7.5 11.5 L0.5 7.2 Z" fill="#ece89c"/><path d="M7.5 0.5 L14.5 7.2 L7.5 11.5 Z" fill="#aca873"/><path d="M7.5 0.5 L14.5 7.2 L7.5 11.5 L0.5 7.2 Z" stroke="#5a5210" stroke-width="1" fill="none"/></svg><div class="t" style="left:106px;top:373.52px;font-size:11.2px;font-weight:bold;color:#fff;">Plant Refit Engr</div><div class="t" style="left:208px;top:374.52px;font-size:11.2px;font-weight:bold;color:#fff;">Plant Refit Engineering</div><div class="t" style="left:401px;top:374.52px;font-size:11.2px;font-weight:bold;color:#fff;"></div><div class="t" style="left:475px;top:374.52px;font-size:11.2px;font-weight:bold;color:#fff;"></div><div class="t" style="left:675px;top:374.52px;font-size:11.2px;font-weight:bold;color:#fff;"></div><div class="t" style="left:800px;top:373.84px;font-size:12px;width:64px;text-align:right;color:#fff;"></div><div style="left:14px;top:390px;width:14px;height:18px;background:#0000ff;"></div><div style="left:28px;top:390px;width:14px;height:18px;background:#80ff80;"></div><div style="left:42px;top:390px;width:14px;height:18px;background:#ffff00;"></div><div style="left:56px;top:390px;width:14px;height:18px;background:#0000ff;"></div><div style="left:27px;top:390px;width:1px;height:18px;background:#d8d4c8;"></div><div style="left:41px;top:390px;width:1px;height:18px;background:#d8d4c8;"></div><div style="left:55px;top:390px;width:1px;height:18px;background:#d8d4c8;"></div><div style="left:70px;top:390px;width:797px;height:18px;background:#ff0000;"></div><div style="left:69px;top:390px;width:1px;height:18px;background:#d8d4c8;"></div><div style="left:83px;top:389px;width:784px;height:1px;background:#d8d4c8;"></div><svg style="position:absolute;left:84px;top:393px" width="15" height="12" viewBox="0 0 15 12"><path d="M7.5 0.5 L14.5 7.2 L7.5 11.5 L0.5 7.2 Z" fill="#ece89c"/><path d="M7.5 0.5 L14.5 7.2 L7.5 11.5 Z" fill="#aca873"/><path d="M7.5 0.5 L14.5 7.2 L7.5 11.5 L0.5 7.2 Z" stroke="#5a5210" stroke-width="1" fill="none"/></svg><div class="t" style="left:106px;top:391.52px;font-size:11.2px;font-weight:bold;color:#fff;">Plant Refit Const</div><div class="t" style="left:208px;top:392.52px;font-size:11.2px;font-weight:bold;color:#fff;">Plant Refit Construction</div><div class="t" style="left:401px;top:392.52px;font-size:11.2px;font-weight:bold;color:#fff;"></div><div class="t" style="left:475px;top:392.52px;font-size:11.2px;font-weight:bold;color:#fff;"></div><div class="t" style="left:675px;top:392.52px;font-size:11.2px;font-weight:bold;color:#fff;"></div><div class="t" style="left:800px;top:391.84px;font-size:12px;width:64px;text-align:right;color:#fff;"></div><div style="left:14px;top:408px;width:14px;height:18px;background:#0000ff;"></div><div style="left:28px;top:408px;width:14px;height:18px;background:#80ff80;"></div><div style="left:27px;top:408px;width:1px;height:18px;background:#d8d4c8;"></div><div style="left:42px;top:408px;width:825px;height:18px;background:#ffff00;"></div><div style="left:41px;top:408px;width:1px;height:18px;background:#d8d4c8;"></div><div style="left:69px;top:407px;width:798px;height:1px;background:#d8d4c8;"></div><div style="left:44px;top:412px;width:9px;height:9px;background:#fff;border:1px solid #aca899;box-sizing:border-box;"><div style="left:1px;top:3px;width:5px;height:1px;background:#000;"></div></div><svg style="position:absolute;left:56px;top:411px" width="15" height="12" viewBox="0 0 15 12"><path d="M7.5 0.5 L14.5 7.2 L7.5 11.5 L0.5 7.2 Z" fill="#ece89c"/><path d="M7.5 0.5 L14.5 7.2 L7.5 11.5 Z" fill="#aca873"/><path d="M7.5 0.5 L14.5 7.2 L7.5 11.5 L0.5 7.2 Z" stroke="#5a5210" stroke-width="1" fill="none"/></svg><div class="t" style="left:78px;top:410.42px;font-size:12.5px;font-weight:bold;color:#0000ff;transform:scaleX(0.94);transform-origin:0 0;">State DOT</div><div class="t" style="left:208px;top:411.42px;font-size:12.5px;font-weight:bold;color:#0000ff;transform:scaleX(0.94);transform-origin:0 0;"></div><div class="t" style="left:401px;top:411.42px;font-size:12.5px;font-weight:bold;color:#0000ff;transform:scaleX(0.94);transform-origin:0 0;"></div><div class="t" style="left:475px;top:411.42px;font-size:12.5px;font-weight:bold;color:#0000ff;transform:scaleX(0.94);transform-origin:0 0;"></div><div class="t" style="left:675px;top:411.42px;font-size:12.5px;font-weight:bold;color:#0000ff;transform:scaleX(0.94);transform-origin:0 0;"></div><div class="t" style="left:800px;top:409.84px;font-size:12px;width:64px;text-align:right;color:#0000ff;"></div><div style="left:14px;top:426px;width:14px;height:18px;background:#0000ff;"></div><div style="left:28px;top:426px;width:14px;height:18px;background:#80ff80;"></div><div style="left:42px;top:426px;width:14px;height:18px;background:#ffff00;"></div><div style="left:27px;top:426px;width:1px;height:18px;background:#d8d4c8;"></div><div style="left:41px;top:426px;width:1px;height:18px;background:#d8d4c8;"></div><div style="left:56px;top:426px;width:811px;height:18px;background:#0000ff;"></div><div style="left:55px;top:426px;width:1px;height:18px;background:#d8d4c8;"></div><div style="left:55px;top:425px;width:812px;height:1px;background:#d8d4c8;"></div><div style="left:58px;top:430px;width:9px;height:9px;background:#fff;border:1px solid #aca899;box-sizing:border-box;"><div style="left:1px;top:3px;width:5px;height:1px;background:#000;"></div></div><svg style="position:absolute;left:70px;top:429px" width="15" height="12" viewBox="0 0 15 12"><path d="M7.5 0.5 L14.5 7.2 L7.5 11.5 L0.5 7.2 Z" fill="#ece89c"/><path d="M7.5 0.5 L14.5 7.2 L7.5 11.5 Z" fill="#aca873"/><path d="M7.5 0.5 L14.5 7.2 L7.5 11.5 L0.5 7.2 Z" stroke="#5a5210" stroke-width="1" fill="none"/></svg><div class="t" style="left:92px;top:427.52px;font-size:11.2px;font-weight:bold;color:#fff;">Highway</div><div class="t" style="left:208px;top:428.52px;font-size:11.2px;font-weight:bold;color:#fff;"></div><div class="t" style="left:401px;top:428.52px;font-size:11.2px;font-weight:bold;color:#fff;"></div><div class="t" style="left:475px;top:428.52px;font-size:11.2px;font-weight:bold;color:#fff;"></div><div class="t" style="left:675px;top:428.52px;font-size:11.2px;font-weight:bold;color:#fff;"></div><div class="t" style="left:800px;top:427.84px;font-size:12px;width:64px;text-align:right;color:#fff;"></div><div style="left:14px;top:444px;width:14px;height:18px;background:#0000ff;"></div><div style="left:28px;top:444px;width:14px;height:18px;background:#80ff80;"></div><div style="left:42px;top:444px;width:14px;height:18px;background:#ffff00;"></div><div style="left:56px;top:444px;width:14px;height:18px;background:#0000ff;"></div><div style="left:27px;top:444px;width:1px;height:18px;background:#d8d4c8;"></div><div style="left:41px;top:444px;width:1px;height:18px;background:#d8d4c8;"></div><div style="left:55px;top:444px;width:1px;height:18px;background:#d8d4c8;"></div><div style="left:70px;top:444px;width:797px;height:18px;background:#ff0000;"></div><div style="left:69px;top:444px;width:1px;height:18px;background:#d8d4c8;"></div><div style="left:69px;top:443px;width:798px;height:1px;background:#d8d4c8;"></div><svg style="position:absolute;left:84px;top:447px" width="15" height="12" viewBox="0 0 15 12"><path d="M7.5 0.5 L14.5 7.2 L7.5 11.5 L0.5 7.2 Z" fill="#ece89c"/><path d="M7.5 0.5 L14.5 7.2 L7.5 11.5 Z" fill="#aca873"/><path d="M7.5 0.5 L14.5 7.2 L7.5 11.5 L0.5 7.2 Z" stroke="#5a5210" stroke-width="1" fill="none"/></svg><div class="t" style="left:106px;top:445.52px;font-size:11.2px;font-weight:bold;color:#fff;">Highway Const</div><div class="t" style="left:208px;top:446.52px;font-size:11.2px;font-weight:bold;color:#fff;"></div><div class="t" style="left:401px;top:446.52px;font-size:11.2px;font-weight:bold;color:#fff;"></div><div class="t" style="left:475px;top:446.52px;font-size:11.2px;font-weight:bold;color:#fff;"></div><div class="t" style="left:675px;top:446.52px;font-size:11.2px;font-weight:bold;color:#fff;"></div><div class="t" style="left:800px;top:445.84px;font-size:12px;width:64px;text-align:right;color:#fff;"></div><div style="left:14px;top:462px;width:14px;height:18px;background:#0000ff;"></div><div style="left:28px;top:462px;width:14px;height:18px;background:#80ff80;"></div><div style="left:42px;top:462px;width:14px;height:18px;background:#ffff00;"></div><div style="left:27px;top:462px;width:1px;height:18px;background:#d8d4c8;"></div><div style="left:41px;top:462px;width:1px;height:18px;background:#d8d4c8;"></div><div style="left:56px;top:462px;width:811px;height:18px;background:#0000ff;"></div><div style="left:55px;top:462px;width:1px;height:18px;background:#d8d4c8;"></div><div style="left:69px;top:461px;width:798px;height:1px;background:#d8d4c8;"></div><svg style="position:absolute;left:70px;top:465px" width="15" height="12" viewBox="0 0 15 12"><path d="M7.5 0.5 L14.5 7.2 L7.5 11.5 L0.5 7.2 Z" fill="#ece89c"/><path d="M7.5 0.5 L14.5 7.2 L7.5 11.5 Z" fill="#aca873"/><path d="M7.5 0.5 L14.5 7.2 L7.5 11.5 L0.5 7.2 Z" stroke="#5a5210" stroke-width="1" fill="none"/></svg><div class="t" style="left:92px;top:463.52px;font-size:11.2px;font-weight:bold;color:#fff;">Project Reviews</div><div class="t" style="left:208px;top:464.52px;font-size:11.2px;font-weight:bold;color:#fff;"></div><div class="t" style="left:401px;top:464.52px;font-size:11.2px;font-weight:bold;color:#fff;"></div><div class="t" style="left:475px;top:464.52px;font-size:11.2px;font-weight:bold;color:#fff;"></div><div class="t" style="left:675px;top:464.52px;font-size:11.2px;font-weight:bold;color:#fff;"></div><div class="t" style="left:800px;top:463.84px;font-size:12px;width:64px;text-align:right;color:#fff;"></div><div style="left:14px;top:480px;width:14px;height:18px;background:#0000ff;"></div><div style="left:28px;top:480px;width:14px;height:18px;background:#80ff80;"></div><div style="left:27px;top:480px;width:1px;height:18px;background:#d8d4c8;"></div><div style="left:42px;top:480px;width:825px;height:18px;background:#ffff00;"></div><div style="left:41px;top:480px;width:1px;height:18px;background:#d8d4c8;"></div><div style="left:55px;top:479px;width:812px;height:1px;background:#d8d4c8;"></div><div style="left:44px;top:484px;width:9px;height:9px;background:#fff;border:1px solid #aca899;box-sizing:border-box;"><div style="left:1px;top:3px;width:5px;height:1px;background:#000;"></div></div><svg style="position:absolute;left:56px;top:483px" width="15" height="12" viewBox="0 0 15 12"><path d="M7.5 0.5 L14.5 7.2 L7.5 11.5 L0.5 7.2 Z" fill="#ece89c"/><path d="M7.5 0.5 L14.5 7.2 L7.5 11.5 Z" fill="#aca873"/><path d="M7.5 0.5 L14.5 7.2 L7.5 11.5 L0.5 7.2 Z" stroke="#5a5210" stroke-width="1" fill="none"/></svg><div class="t" style="left:78px;top:482.42px;font-size:12.5px;font-weight:bold;color:#0000ff;transform:scaleX(0.94);transform-origin:0 0;">Pennsylvania</div><div class="t" style="left:208px;top:483.42px;font-size:12.5px;font-weight:bold;color:#0000ff;transform:scaleX(0.94);transform-origin:0 0;"></div><div class="t" style="left:401px;top:483.42px;font-size:12.5px;font-weight:bold;color:#0000ff;transform:scaleX(0.94);transform-origin:0 0;"></div><div class="t" style="left:475px;top:483.42px;font-size:12.5px;font-weight:bold;color:#0000ff;transform:scaleX(0.94);transform-origin:0 0;"></div><div class="t" style="left:675px;top:483.42px;font-size:12.5px;font-weight:bold;color:#0000ff;transform:scaleX(0.94);transform-origin:0 0;"></div><div class="t" style="left:800px;top:481.84px;font-size:12px;width:64px;text-align:right;color:#0000ff;"></div><div style="left:14px;top:498px;width:14px;height:18px;background:#0000ff;"></div><div style="left:28px;top:498px;width:14px;height:18px;background:#80ff80;"></div><div style="left:42px;top:498px;width:14px;height:18px;background:#ffff00;"></div><div style="left:27px;top:498px;width:1px;height:18px;background:#d8d4c8;"></div><div style="left:41px;top:498px;width:1px;height:18px;background:#d8d4c8;"></div><div style="left:56px;top:498px;width:811px;height:18px;background:#0000ff;"></div><div style="left:55px;top:498px;width:1px;height:18px;background:#d8d4c8;"></div><div style="left:55px;top:497px;width:812px;height:1px;background:#d8d4c8;"></div><svg style="position:absolute;left:70px;top:501px" width="15" height="12" viewBox="0 0 15 12"><path d="M7.5 0.5 L14.5 7.2 L7.5 11.5 L0.5 7.2 Z" fill="#ece89c"/><path d="M7.5 0.5 L14.5 7.2 L7.5 11.5 Z" fill="#aca873"/><path d="M7.5 0.5 L14.5 7.2 L7.5 11.5 L0.5 7.2 Z" stroke="#5a5210" stroke-width="1" fill="none"/></svg><div class="t" style="left:92px;top:499.52px;font-size:11.2px;font-weight:bold;color:#fff;">Pittsburgh</div><div class="t" style="left:208px;top:500.52px;font-size:11.2px;font-weight:bold;color:#fff;"></div><div class="t" style="left:401px;top:500.52px;font-size:11.2px;font-weight:bold;color:#fff;"></div><div class="t" style="left:475px;top:500.52px;font-size:11.2px;font-weight:bold;color:#fff;"></div><div class="t" style="left:675px;top:500.52px;font-size:11.2px;font-weight:bold;color:#fff;"></div><div class="t" style="left:800px;top:499.84px;font-size:12px;width:64px;text-align:right;color:#fff;"></div><div style="left:14px;top:516px;width:14px;height:18px;background:#0000ff;"></div><div style="left:28px;top:516px;width:14px;height:18px;background:#80ff80;"></div><div style="left:42px;top:516px;width:14px;height:18px;background:#ffff00;"></div><div style="left:27px;top:516px;width:1px;height:18px;background:#d8d4c8;"></div><div style="left:41px;top:516px;width:1px;height:18px;background:#d8d4c8;"></div><div style="left:56px;top:516px;width:811px;height:18px;background:#0000ff;"></div><div style="left:55px;top:516px;width:1px;height:18px;background:#d8d4c8;"></div><div style="left:69px;top:515px;width:798px;height:1px;background:#d8d4c8;"></div><svg style="position:absolute;left:70px;top:519px" width="15" height="12" viewBox="0 0 15 12"><path d="M7.5 0.5 L14.5 7.2 L7.5 11.5 L0.5 7.2 Z" fill="#ece89c"/><path d="M7.5 0.5 L14.5 7.2 L7.5 11.5 Z" fill="#aca873"/><path d="M7.5 0.5 L14.5 7.2 L7.5 11.5 L0.5 7.2 Z" stroke="#5a5210" stroke-width="1" fill="none"/></svg><div class="t" style="left:92px;top:517.52px;font-size:11.2px;font-weight:bold;color:#fff;">Reading</div><div class="t" style="left:208px;top:518.52px;font-size:11.2px;font-weight:bold;color:#fff;"></div><div class="t" style="left:401px;top:518.52px;font-size:11.2px;font-weight:bold;color:#fff;"></div><div class="t" style="left:475px;top:518.52px;font-size:11.2px;font-weight:bold;color:#fff;"></div><div class="t" style="left:675px;top:518.52px;font-size:11.2px;font-weight:bold;color:#fff;"></div><div class="t" style="left:800px;top:517.84px;font-size:12px;width:64px;text-align:right;color:#fff;"></div><div style="left:2px;top:533px;width:866px;height:1px;background:#000;"></div><div style="left:103px;top:174px;width:102px;height:17px;border:2px solid #d2640c;box-sizing:border-box;"></div><svg style="position:absolute;left:182px;top:181px" width="14" height="21" viewBox="0 0 14 21"><path d="M1.5 1.5 L1.5 17.5 L5.3 13.7 L8.3 19.7 L10.6 18.6 L7.6 12.6 L12.8 12.6 Z" fill="#fff" stroke="#000" stroke-width="1" stroke-linejoin="miter"/></svg><div style="left:348px;top:242px;width:618px;height:164px;background:#fff;"></div><div style="left:348px;top:242px;width:618px;height:1px;background:#4a1250;"></div><div style="left:348px;top:242px;width:1px;height:164px;background:#4a1250;"></div><div style="left:965px;top:242px;width:1px;height:164px;background:#4a1250;"></div><div style="left:349px;top:243px;width:616px;height:2px;background:#e9eef7;"></div><div style="left:349px;top:245px;width:616px;height:1px;background:#9a9a9a;"></div><div style="left:349px;top:246px;width:616px;height:16px;background:#dee1e6;"></div><div style="left:349px;top:262px;width:616px;height:1px;background:#a9adb3;"></div><div style="left:349px;top:263px;width:25px;height:143px;background:#dee1e6;"></div><div style="left:374px;top:246px;width:1px;height:160px;background:#a9adb3;"></div><div style="left:505px;top:246px;width:1px;height:16px;background:#a9adb3;"></div><div style="left:505px;top:263px;width:1px;height:143px;background:#d9dbdd;"></div><div style="left:629px;top:246px;width:1px;height:16px;background:#a9adb3;"></div><div style="left:629px;top:263px;width:1px;height:143px;background:#d9dbdd;"></div><div style="left:786px;top:246px;width:1px;height:16px;background:#a9adb3;"></div><div style="left:786px;top:263px;width:1px;height:143px;background:#d9dbdd;"></div><div style="left:956px;top:246px;width:1px;height:16px;background:#a9adb3;"></div><div style="left:956px;top:263px;width:1px;height:143px;background:#d9dbdd;"></div><div style="left:349px;top:283px;width:25px;height:1px;background:#a9adb3;"></div><div style="left:375px;top:283px;width:590px;height:1px;background:#d9dbdd;"></div><div style="left:349px;top:303px;width:25px;height:1px;background:#a9adb3;"></div><div style="left:375px;top:303px;width:590px;height:1px;background:#d9dbdd;"></div><div style="left:349px;top:323px;width:25px;height:1px;background:#a9adb3;"></div><div style="left:375px;top:323px;width:590px;height:1px;background:#d9dbdd;"></div><div style="left:349px;top:343px;width:25px;height:1px;background:#a9adb3;"></div><div style="left:375px;top:343px;width:590px;height:1px;background:#d9dbdd;"></div><div style="left:349px;top:363px;width:25px;height:1px;background:#a9adb3;"></div><div style="left:375px;top:363px;width:590px;height:1px;background:#d9dbdd;"></div><div style="left:349px;top:383px;width:25px;height:1px;background:#a9adb3;"></div><div style="left:375px;top:383px;width:590px;height:1px;background:#d9dbdd;"></div><div style="left:349px;top:403px;width:25px;height:1px;background:#a9adb3;"></div><div style="left:375px;top:403px;width:590px;height:1px;background:#d9dbdd;"></div><svg style="position:absolute;left:362px;top:251px" width="8" height="8" viewBox="0 0 8 8"><path d="M8 0 L8 8 L0 8 Z" fill="#b9bcc0"/></svg><div style="left:375px;top:284px;width:581px;height:19px;background:#b8cce4;"></div><div style="left:505px;top:284px;width:1px;height:19px;background:#b8cce4;"></div><div style="left:629px;top:284px;width:1px;height:19px;background:#b8cce4;"></div><div style="left:786px;top:284px;width:1px;height:19px;background:#b8cce4;"></div><div class="t" style="left:375px;top:249.84px;font-size:12px;width:130px;text-align:center;color:#3a3a3a;">A</div><div class="t" style="left:506px;top:249.84px;font-size:12px;width:123px;text-align:center;color:#3a3a3a;">B</div><div class="t" style="left:630px;top:249.84px;font-size:12px;width:156px;text-align:center;color:#3a3a3a;">C</div><div class="t" style="left:787px;top:249.84px;font-size:12px;width:169px;text-align:center;color:#3a3a3a;">D</div><div class="t" style="left:957px;top:248.84px;font-size:12px;"></div><div class="t" style="left:349px;top:269.42px;font-size:12.5px;width:25px;text-align:center;color:#2b2b2b;">1</div><div class="t" style="left:349px;top:289.42px;font-size:12.5px;width:25px;text-align:center;color:#2b2b2b;">2</div><div class="t" style="left:349px;top:309.42px;font-size:12.5px;width:25px;text-align:center;color:#2b2b2b;">3</div><div class="t" style="left:349px;top:329.42px;font-size:12.5px;width:25px;text-align:center;color:#2b2b2b;">4</div><div class="t" style="left:349px;top:349.42px;font-size:12.5px;width:25px;text-align:center;color:#2b2b2b;">5</div><div class="t" style="left:349px;top:369.42px;font-size:12.5px;width:25px;text-align:center;color:#2b2b2b;">6</div><div class="t" style="left:349px;top:389.42px;font-size:12.5px;width:25px;text-align:center;color:#2b2b2b;">7</div><div class="t" style="left:378px;top:265.88px;font-size:15.5px;font-weight:bold;color:#000;">EPS</div><div class="t" style="left:377px;top:289.42px;font-size:12.5px;font-weight:bold;color:#000;">OBSId</div><div class="t" style="left:508px;top:289.42px;font-size:12.5px;font-weight:bold;color:#000;">ParentEPSId</div><div class="t" style="left:632px;top:289.42px;font-size:12.5px;font-weight:bold;color:#000;">Id</div><div class="t" style="left:789px;top:289.42px;font-size:12.5px;font-weight:bold;color:#000;">Name</div><div class="t" style="left:377px;top:308.49px;font-size:13.6px;color:#000;">ACME</div><div class="t" style="left:508px;top:308.49px;font-size:13.6px;color:#000;"></div><div class="t" style="left:632px;top:308.49px;font-size:13.6px;color:#000;">ACME</div><div class="t" style="left:789px;top:308.49px;font-size:13.6px;color:#000;">ACME Corporation</div><div class="t" style="left:389px;top:328.49px;font-size:13.6px;color:#000;">VP of Construction</div><div class="t" style="left:508px;top:328.49px;font-size:13.6px;color:#000;">ACME</div><div class="t" style="left:644px;top:328.49px;font-size:13.6px;color:#000;">Construction</div><div class="t" style="left:789px;top:328.49px;font-size:13.6px;color:#000;">Construction Projects</div><div class="t" style="left:401px;top:348.49px;font-size:13.6px;color:#000;">Andy Mason</div><div class="t" style="left:520px;top:348.49px;font-size:13.6px;color:#000;">Construction</div><div class="t" style="left:656px;top:348.49px;font-size:13.6px;color:#000;">Caprini Corp</div><div class="t" style="left:789px;top:348.49px;font-size:13.6px;color:#000;">Caprini Corporation</div><div class="t" style="left:401px;top:368.49px;font-size:13.6px;color:#000;">Andy Mason</div><div class="t" style="left:532px;top:368.49px;font-size:13.6px;color:#000;">Caprini Corp</div><div class="t" style="left:668px;top:368.49px;font-size:13.6px;color:#000;">APEX</div><div class="t" style="left:789px;top:368.49px;font-size:13.6px;color:#000;">Apex Inc.</div><div class="t" style="left:401px;top:388.49px;font-size:13.6px;color:#000;">Andy Mason</div><div class="t" style="left:532px;top:388.49px;font-size:13.6px;color:#000;">Caprini Corp</div><div class="t" style="left:668px;top:388.49px;font-size:13.6px;color:#000;">Philadelphia</div><div class="t" style="left:789px;top:388.49px;font-size:13.6px;color:#000;">City of Philadelphia</div><div style="left:210px;top:406px;width:757px;height:253px;background:#fff;"></div><div style="left:211px;top:408px;width:756px;height:1px;background:#4a1250;"></div><div style="left:211px;top:408px;width:1px;height:251px;background:#4a1250;"></div><div style="left:966px;top:408px;width:1px;height:251px;background:#4a1250;"></div><div style="left:212px;top:409px;width:754px;height:2px;background:#e9eef7;"></div><div style="left:212px;top:411px;width:754px;height:1px;background:#9a9a9a;"></div><div style="left:212px;top:412px;width:754px;height:16px;background:#dee1e6;"></div><div style="left:212px;top:428px;width:754px;height:1px;background:#a9adb3;"></div><div style="left:212px;top:429px;width:25px;height:230px;background:#dee1e6;"></div><div style="left:237px;top:412px;width:1px;height:247px;background:#a9adb3;"></div><div style="left:300px;top:412px;width:1px;height:16px;background:#a9adb3;"></div><div style="left:300px;top:429px;width:1px;height:230px;background:#d9dbdd;"></div><div style="left:468px;top:412px;width:1px;height:16px;background:#a9adb3;"></div><div style="left:468px;top:429px;width:1px;height:230px;background:#d9dbdd;"></div><div style="left:592px;top:412px;width:1px;height:16px;background:#a9adb3;"></div><div style="left:592px;top:429px;width:1px;height:230px;background:#d9dbdd;"></div><div style="left:678px;top:412px;width:1px;height:16px;background:#a9adb3;"></div><div style="left:678px;top:429px;width:1px;height:230px;background:#d9dbdd;"></div><div style="left:744px;top:412px;width:1px;height:16px;background:#a9adb3;"></div><div style="left:744px;top:429px;width:1px;height:230px;background:#d9dbdd;"></div><div style="left:827px;top:412px;width:1px;height:16px;background:#a9adb3;"></div><div style="left:827px;top:429px;width:1px;height:230px;background:#d9dbdd;"></div><div style="left:915px;top:412px;width:1px;height:16px;background:#a9adb3;"></div><div style="left:915px;top:429px;width:1px;height:230px;background:#d9dbdd;"></div><div style="left:960px;top:412px;width:1px;height:16px;background:#a9adb3;"></div><div style="left:960px;top:429px;width:1px;height:230px;background:#d9dbdd;"></div><div style="left:212px;top:452px;width:25px;height:1px;background:#a9adb3;"></div><div style="left:238px;top:452px;width:728px;height:1px;background:#d9dbdd;"></div><div style="left:212px;top:472px;width:25px;height:1px;background:#a9adb3;"></div><div style="left:238px;top:472px;width:728px;height:1px;background:#d9dbdd;"></div><div style="left:212px;top:492px;width:25px;height:1px;background:#a9adb3;"></div><div style="left:238px;top:492px;width:728px;height:1px;background:#d9dbdd;"></div><div style="left:212px;top:512px;width:25px;height:1px;background:#a9adb3;"></div><div style="left:238px;top:512px;width:728px;height:1px;background:#d9dbdd;"></div><div style="left:212px;top:532px;width:25px;height:1px;background:#a9adb3;"></div><div style="left:238px;top:532px;width:728px;height:1px;background:#d9dbdd;"></div><div style="left:212px;top:552px;width:25px;height:1px;background:#a9adb3;"></div><div style="left:238px;top:552px;width:728px;height:1px;background:#d9dbdd;"></div><div style="left:212px;top:572px;width:25px;height:1px;background:#a9adb3;"></div><div style="left:238px;top:572px;width:728px;height:1px;background:#d9dbdd;"></div><div style="left:212px;top:592px;width:25px;height:1px;background:#a9adb3;"></div><div style="left:238px;top:592px;width:728px;height:1px;background:#d9dbdd;"></div><div style="left:212px;top:612px;width:25px;height:1px;background:#a9adb3;"></div><div style="left:238px;top:612px;width:728px;height:1px;background:#d9dbdd;"></div><div style="left:212px;top:632px;width:25px;height:1px;background:#a9adb3;"></div><div style="left:238px;top:632px;width:728px;height:1px;background:#d9dbdd;"></div><div style="left:212px;top:649px;width:25px;height:1px;background:#a9adb3;"></div><div style="left:238px;top:649px;width:728px;height:1px;background:#d9dbdd;"></div><svg style="position:absolute;left:225px;top:417px" width="8" height="8" viewBox="0 0 8 8"><path d="M8 0 L8 8 L0 8 Z" fill="#b9bcc0"/></svg><div style="left:238px;top:453px;width:728px;height:19px;background:#b8cce4;"></div><div class="t" style="left:238px;top:414.84px;font-size:12px;width:62px;text-align:center;color:#3a3a3a;">A</div><div class="t" style="left:301px;top:414.84px;font-size:12px;width:167px;text-align:center;color:#3a3a3a;">B</div><div class="t" style="left:469px;top:414.84px;font-size:12px;width:123px;text-align:center;color:#3a3a3a;">C</div><div class="t" style="left:593px;top:414.84px;font-size:12px;width:85px;text-align:center;color:#3a3a3a;">D</div><div class="t" style="left:679px;top:414.84px;font-size:12px;width:65px;text-align:center;color:#3a3a3a;">E</div><div class="t" style="left:745px;top:414.84px;font-size:12px;width:82px;text-align:center;color:#3a3a3a;">F</div><div class="t" style="left:828px;top:414.84px;font-size:12px;width:87px;text-align:center;color:#3a3a3a;">G</div><div class="t" style="left:916px;top:414.84px;font-size:12px;width:44px;text-align:center;color:#3a3a3a;">H</div><div class="t" style="left:212px;top:438.42px;font-size:12.5px;width:25px;text-align:center;color:#2b2b2b;">1</div><div class="t" style="left:212px;top:458.42px;font-size:12.5px;width:25px;text-align:center;color:#2b2b2b;">2</div><div class="t" style="left:212px;top:478.42px;font-size:12.5px;width:25px;text-align:center;color:#2b2b2b;">3</div><div class="t" style="left:212px;top:498.42px;font-size:12.5px;width:25px;text-align:center;color:#2b2b2b;">4</div><div class="t" style="left:212px;top:518.42px;font-size:12.5px;width:25px;text-align:center;color:#2b2b2b;">5</div><div class="t" style="left:212px;top:538.42px;font-size:12.5px;width:25px;text-align:center;color:#2b2b2b;">6</div><div class="t" style="left:212px;top:558.42px;font-size:12.5px;width:25px;text-align:center;color:#2b2b2b;">7</div><div class="t" style="left:212px;top:578.42px;font-size:12.5px;width:25px;text-align:center;color:#2b2b2b;">8</div><div class="t" style="left:212px;top:598.42px;font-size:12.5px;width:25px;text-align:center;color:#2b2b2b;">9</div><div class="t" style="left:212px;top:618.42px;font-size:12.5px;width:25px;text-align:center;color:#2b2b2b;">10</div><div class="t" style="left:212px;top:635.42px;font-size:12.5px;width:25px;text-align:center;color:#2b2b2b;">11</div><div class="t" style="left:212px;top:652.42px;font-size:12.5px;width:25px;text-align:center;color:#2b2b2b;">12</div><div class="t" style="left:241px;top:432.49px;font-size:19.5px;font-weight:bold;color:#000;">Project</div><div class="t" style="left:239px;top:458.16px;font-size:12.8px;font-weight:bold;color:#000;">Id</div><div class="t" style="left:302px;top:458.16px;font-size:12.8px;font-weight:bold;color:#000;">Name</div><div class="t" style="left:470px;top:458.16px;font-size:12.8px;font-weight:bold;color:#000;">OBSId</div><div class="t" style="left:594px;top:458.16px;font-size:12.8px;font-weight:bold;color:#000;">ParentEPSId</div><div class="t" style="left:680px;top:458.16px;font-size:12.8px;font-weight:bold;color:#000;">DataDate</div><div class="t" style="left:746px;top:458.16px;font-size:12.8px;font-weight:bold;color:#000;">PlannedStart</div><div class="t" style="left:829px;top:458.16px;font-size:12.8px;font-weight:bold;color:#000;">MustFinishBy</div><div class="t" style="left:917px;top:458.16px;font-size:12.8px;font-weight:bold;color:#000;">Status</div><div class="t" style="left:963px;top:458.16px;font-size:12.8px;font-weight:bold;color:#000;overflow:hidden;width:3px;padding-bottom:4px;">UserField</div><div class="t" style="left:239px;top:477.00px;font-size:13px;color:#000;overflow:hidden;padding-bottom:4px;width:61px;">ABC-123</div><div class="t" style="left:302px;top:477.00px;font-size:13px;color:#000;overflow:hidden;padding-bottom:4px;width:166px;">New Building Construction</div><div class="t" style="left:471px;top:477.49px;font-size:13.6px;color:#000;overflow:hidden;padding-bottom:4px;width:122px;">VP of Construction</div><div class="t" style="left:594px;top:477.00px;font-size:13px;color:#000;overflow:hidden;padding-bottom:4px;width:84px;">APEX</div><div class="t" style="left:678px;top:477.00px;font-size:13px;width:63px;text-align:right;color:#000;">21-Sep-14</div><div class="t" style="left:744px;top:477.00px;font-size:13px;width:80px;text-align:right;color:#000;">21-Sep-14</div><div class="t" style="left:827px;top:477.00px;font-size:13px;width:85px;text-align:right;color:#000;">6-Jun-15</div><div class="t" style="left:917px;top:477.00px;font-size:13px;color:#000;overflow:hidden;padding-bottom:4px;width:43px;">Active</div><div class="t" style="left:239px;top:497.00px;font-size:13px;color:#000;overflow:hidden;padding-bottom:4px;width:61px;">ABC-200</div><div class="t" style="left:302px;top:497.00px;font-size:13px;color:#000;overflow:hidden;padding-bottom:4px;width:166px;">Expand Grace Hospital</div><div class="t" style="left:471px;top:497.49px;font-size:13.6px;color:#000;overflow:hidden;padding-bottom:4px;width:122px;">VP of Construction</div><div class="t" style="left:594px;top:497.00px;font-size:13px;color:#000;overflow:hidden;padding-bottom:4px;width:84px;">APEX</div><div class="t" style="left:678px;top:497.00px;font-size:13px;width:63px;text-align:right;color:#000;">1-Nov-14</div><div class="t" style="left:744px;top:497.00px;font-size:13px;width:80px;text-align:right;color:#000;">1-Nov-14</div><div class="t" style="left:827px;top:497.00px;font-size:13px;width:85px;text-align:right;color:#000;">9-Jul-15</div><div class="t" style="left:917px;top:497.00px;font-size:13px;color:#000;overflow:hidden;padding-bottom:4px;width:43px;">Active</div><div class="t" style="left:239px;top:517.00px;font-size:13px;color:#000;overflow:hidden;padding-bottom:4px;width:61px;">PHE-230</div><div class="t" style="left:302px;top:517.00px;font-size:13px;color:#000;overflow:hidden;padding-bottom:4px;width:166px;">Franklin School Renovation</div><div class="t" style="left:471px;top:517.49px;font-size:13.6px;color:#000;overflow:hidden;padding-bottom:4px;width:122px;">Andy Mason</div><div class="t" style="left:594px;top:517.00px;font-size:13px;color:#000;overflow:hidden;padding-bottom:4px;width:84px;">Philadelphia</div><div class="t" style="left:678px;top:517.00px;font-size:13px;width:63px;text-align:right;color:#000;">15-Oct-14</div><div class="t" style="left:744px;top:517.00px;font-size:13px;width:80px;text-align:right;color:#000;">15-Oct-14</div><div class="t" style="left:827px;top:517.00px;font-size:13px;width:85px;text-align:right;color:#000;">12-Dec-14</div><div class="t" style="left:917px;top:517.00px;font-size:13px;color:#000;overflow:hidden;padding-bottom:4px;width:43px;">Active</div><div class="t" style="left:239px;top:537.00px;font-size:13px;color:#000;overflow:hidden;padding-bottom:4px;width:61px;">PHE-231</div><div class="t" style="left:302px;top:537.00px;font-size:13px;color:#000;overflow:hidden;padding-bottom:4px;width:166px;">Hero School Renovation</div><div class="t" style="left:471px;top:537.49px;font-size:13.6px;color:#000;overflow:hidden;padding-bottom:4px;width:122px;">Andy Mason</div><div class="t" style="left:594px;top:537.00px;font-size:13px;color:#000;overflow:hidden;padding-bottom:4px;width:84px;">Philadelphia</div><div class="t" style="left:678px;top:537.00px;font-size:13px;width:63px;text-align:right;color:#000;">15-Oct-14</div><div class="t" style="left:744px;top:537.00px;font-size:13px;width:80px;text-align:right;color:#000;">15-Oct-14</div><div class="t" style="left:827px;top:537.00px;font-size:13px;width:85px;text-align:right;color:#000;">12-Dec-14</div><div class="t" style="left:917px;top:537.00px;font-size:13px;color:#000;overflow:hidden;padding-bottom:4px;width:43px;">Active</div><div class="t" style="left:239px;top:557.00px;font-size:13px;color:#000;overflow:hidden;padding-bottom:4px;width:61px;">PHE-232</div><div class="t" style="left:302px;top:557.00px;font-size:13px;color:#000;overflow:hidden;padding-bottom:4px;width:166px;">Westend School Renovation</div><div class="t" style="left:471px;top:557.49px;font-size:13.6px;color:#000;overflow:hidden;padding-bottom:4px;width:122px;">Andy Mason</div><div class="t" style="left:594px;top:557.00px;font-size:13px;color:#000;overflow:hidden;padding-bottom:4px;width:84px;">Philadelphia</div><div class="t" style="left:678px;top:557.00px;font-size:13px;width:63px;text-align:right;color:#000;">15-Oct-14</div><div class="t" style="left:744px;top:557.00px;font-size:13px;width:80px;text-align:right;color:#000;">15-Oct-14</div><div class="t" style="left:827px;top:557.00px;font-size:13px;width:85px;text-align:right;color:#000;">12-Dec-14</div><div class="t" style="left:917px;top:557.00px;font-size:13px;color:#000;overflow:hidden;padding-bottom:4px;width:43px;">Active</div><div class="t" style="left:239px;top:577.00px;font-size:13px;color:#000;overflow:hidden;padding-bottom:4px;width:61px;">PHE-233</div><div class="t" style="left:302px;top:577.00px;font-size:13px;color:#000;overflow:hidden;padding-bottom:4px;width:166px;">Arthur School Renovation</div><div class="t" style="left:471px;top:577.49px;font-size:13.6px;color:#000;overflow:hidden;padding-bottom:4px;width:122px;">Andy Mason</div><div class="t" style="left:594px;top:577.00px;font-size:13px;color:#000;overflow:hidden;padding-bottom:4px;width:84px;">Philadelphia</div><div class="t" style="left:678px;top:577.00px;font-size:13px;width:63px;text-align:right;color:#000;">15-Oct-14</div><div class="t" style="left:744px;top:577.00px;font-size:13px;width:80px;text-align:right;color:#000;">15-Oct-14</div><div class="t" style="left:827px;top:577.00px;font-size:13px;width:85px;text-align:right;color:#000;">12-Dec-14</div><div class="t" style="left:917px;top:577.00px;font-size:13px;color:#000;overflow:hidden;padding-bottom:4px;width:43px;">Active</div><div class="t" style="left:239px;top:597.00px;font-size:13px;color:#000;overflow:hidden;padding-bottom:4px;width:61px;">HAW-343</div><div class="t" style="left:302px;top:597.00px;font-size:13px;color:#000;overflow:hidden;padding-bottom:4px;width:166px;">Packaging Plant Upgrade</div><div class="t" style="left:471px;top:597.49px;font-size:13.6px;color:#000;overflow:hidden;padding-bottom:4px;width:122px;">VP of Construction</div><div class="t" style="left:594px;top:597.00px;font-size:13px;color:#000;overflow:hidden;padding-bottom:4px;width:84px;">Hawthorne Ind</div><div class="t" style="left:678px;top:597.00px;font-size:13px;width:63px;text-align:right;color:#000;">1-Nov-14</div><div class="t" style="left:744px;top:597.00px;font-size:13px;width:80px;text-align:right;color:#000;">1-Nov-14</div><div class="t" style="left:827px;top:597.00px;font-size:13px;width:85px;text-align:right;color:#000;">9-Jul-15</div><div class="t" style="left:917px;top:597.00px;font-size:13px;color:#000;overflow:hidden;padding-bottom:4px;width:43px;">Active</div><div class="t" style="left:239px;top:617.00px;font-size:13px;color:#000;overflow:hidden;padding-bottom:4px;width:61px;">HAW-344</div><div class="t" style="left:302px;top:617.00px;font-size:13px;color:#000;overflow:hidden;padding-bottom:4px;width:166px;">Refinery Expansion</div><div class="t" style="left:471px;top:617.49px;font-size:13.6px;color:#000;overflow:hidden;padding-bottom:4px;width:122px;">VP of Construction</div><div class="t" style="left:594px;top:617.00px;font-size:13px;color:#000;overflow:hidden;padding-bottom:4px;width:84px;">Hawthorne Ind</div><div class="t" style="left:678px;top:617.00px;font-size:13px;width:63px;text-align:right;color:#000;">30-Sep-14</div><div class="t" style="left:744px;top:617.00px;font-size:13px;width:80px;text-align:right;color:#000;">30-Sep-14</div><div class="t" style="left:827px;top:617.00px;font-size:13px;width:85px;text-align:right;color:#000;">2/1/2015</div><div class="t" style="left:917px;top:617.00px;font-size:13px;color:#000;overflow:hidden;padding-bottom:4px;width:43px;">Active</div><div style="left:209px;top:659px;width:760px;height:7px;background:#fff;"></div><div style="left:211px;top:662px;width:756px;height:1px;background:#4a1250;"></div><div style="left:966px;top:659px;width:1px;height:4px;background:#4a1250;"></div>
</body></html>
